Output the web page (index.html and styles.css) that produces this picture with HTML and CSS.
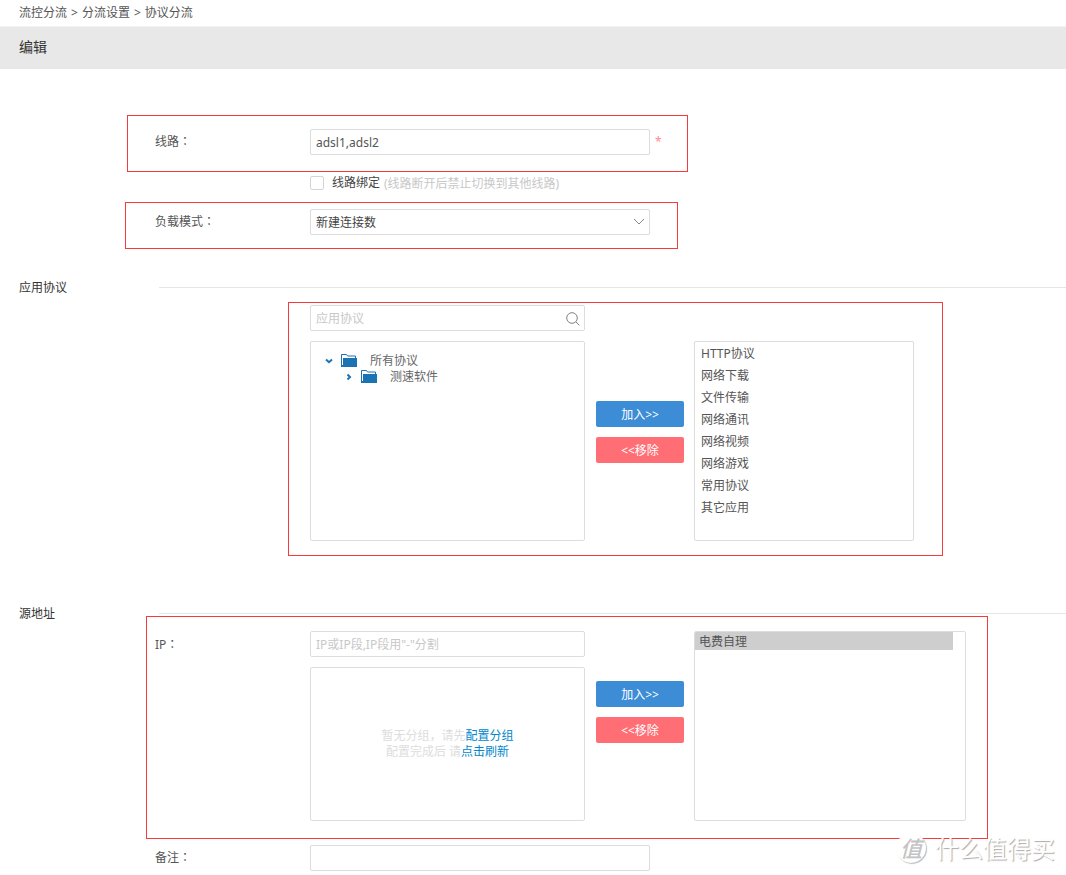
FILE: index.html
```html
<!DOCTYPE html>
<html lang="zh-CN">
<head>
<meta charset="utf-8">
<title>协议分流</title>
<link rel="stylesheet" href="styles.css">
</head>
<body>
<nav class="breadcrumb">
  <span>流控分流</span><span>&gt;</span><span>分流设置</span><span>&gt;</span><span>协议分流</span>
</nav>
<header class="titlebar"><h1 class="title">编辑</h1></header>
<main>
<form class="form">
  <div class="row row-line">
    <label class="label" for="line">线路<span class="mark" lang="zh-TW">：</span></label>
    <input class="field wide" id="line" type="text" value="adsl1,adsl2">
    <span class="required">*</span>
    <span class="outline outline-line"></span>
  </div>
  <div class="row row-check">
    <span class="label"></span>
    <input class="check" id="bind" type="checkbox">
    <label class="check-label" for="bind">线路绑定</label>
    <span class="hint">(线路断开后禁止切换到其他线路)</span>
  </div>
  <div class="row row-line">
    <label class="label" for="mode">负载模式<span class="mark" lang="zh-TW">：</span></label>
    <span class="dropdown wide">
      <select class="field" id="mode"><option>新建连接数</option></select>
      <svg class="arrow" viewBox="0 0 12 8" aria-hidden="true"><path d="M1 1l5 5 5-5"/></svg>
    </span>
    <span class="outline outline-mode"></span>
  </div>

  <div class="section"><h2 class="section-title">应用协议</h2><span class="rule"></span></div>
  <div class="row row-top">
    <span class="label"></span>
    <div class="stack">
      <div class="search">
        <input class="field" type="text" placeholder="应用协议" aria-label="应用协议">
        <svg class="lens" viewBox="0 0 14 14" aria-hidden="true"><circle cx="6" cy="6" r="5.3"/><path d="M9.8 9.8l3.6 3.6"/></svg>
      </div>
      <div class="picker">
        <ul class="box tree">
          <li class="node">
            <svg class="caret" viewBox="0 0 8 8" aria-hidden="true"><path d="M1 2.500L4 5.200l3-2.700"/></svg>
            <svg class="folder" viewBox="0 0 16 14" aria-hidden="true"><path class="folder-back" d="M.5 12.500V.5H5.500l1 1.500H14.500V4"/><path class="folder-front" d="M2 4H16V13H0V11H2z"/></svg>
            <span>所有协议</span>
          </li>
          <li class="node node-child">
            <svg class="caret" viewBox="0 0 8 8" aria-hidden="true"><path d="M2.500 1.500L5 4 2.500 6.500"/></svg>
            <svg class="folder" viewBox="0 0 16 14" aria-hidden="true"><path class="folder-back" d="M.5 12.500V.5H5.500l1 1.500H14.500V4"/><path class="folder-front" d="M2 4H16V13H0V11H2z"/></svg>
            <span>测速软件</span>
          </li>
        </ul>
        <div class="actions actions-protocol">
          <button class="btn btn-add" type="button">加入&gt;&gt;</button>
          <button class="btn btn-remove" type="button">&lt;&lt;移除</button>
        </div>
        <select class="box list list-protocol" multiple aria-label="已选协议">
          <option>HTTP协议</option>
          <option>网络下载</option>
          <option>文件传输</option>
          <option>网络通讯</option>
          <option>网络视频</option>
          <option>网络游戏</option>
          <option>常用协议</option>
          <option>其它应用</option>
        </select>
      </div>
    </div>
    <span class="outline outline-protocol"></span>
  </div>

  <div class="section section-source"><h2 class="section-title">源地址</h2><span class="rule"></span></div>
  <div class="row row-top">
    <label class="label" for="ip">IP<span class="mark" lang="zh-TW">：</span></label>
    <div class="picker">
      <div class="stack">
        <input class="field" id="ip" type="text" placeholder="IP或IP段,IP段用&quot;-&quot;分割">
        <div class="box empty">
          <p class="empty-text">暂无分组，请先<a class="link" href="#">配置分组</a></p>
          <p class="empty-text">配置完成后 请<a class="link" href="#">点击刷新</a></p>
        </div>
      </div>
      <div class="actions actions-source">
        <button class="btn btn-add" type="button">加入&gt;&gt;</button>
        <button class="btn btn-remove" type="button">&lt;&lt;移除</button>
      </div>
      <select class="box list list-source" multiple aria-label="已选源地址">
        <option selected>电费自理</option>
      </select>
    </div>
    <span class="outline outline-source"></span>
  </div>

  <div class="row row-line row-note">
    <label class="label" for="note">备注<span class="mark" lang="zh-TW">：</span></label>
    <input class="field wide" id="note" type="text">
  </div>
</form>
</main>
<div class="watermark"><span class="seal">值</span><span>什么值得买</span></div>
</body>
</html>
```

FILE: styles.css
```css
* { box-sizing: border-box; }

body {
  margin: 0;
  position: relative;
  background: #fff;
  color: #555;
  font: 12px/16px "Noto Sans", "Noto Sans CJK SC", sans-serif;
}

input, select, button { font: inherit; color: inherit; margin: 0; }

.breadcrumb { display: flex; gap: 4px; height: 26px; align-items: center; padding: 0 19px; }

.titlebar {
  height: 43px;
  padding: 0 19px 2px;
  display: flex;
  align-items: center;
  background: #e8e8e8;
  border-top: 1px solid #f2f2f2;
}
.title { margin: 0; font-size: 14px; line-height: 20px; font-weight: 400; color: #333; }

.form { padding: 60px 0 4px; }

.row {
  position: relative;
  display: flex;
  align-items: center;
  padding-left: 155px;
}
.row-line { height: 26px; }
.row-top { align-items: flex-start; }
.row-check { height: 54px; padding-top: 1px; }
.row-note { margin-top: 24px; }

.label { flex: none; width: 155px; line-height: 28px; }
.mark { font-family: "Noto Sans CJK TC", sans-serif; line-height: 1; }

.field {
  width: 100%;
  height: 26px;
  padding: 0 5px;
  border: 1px solid #ddd;
  border-radius: 2px;
  background: #fff;
  outline: 0;
}
.field::placeholder { color: #c8c8c8; opacity: 1; }
.wide { width: 340px; }

.required { margin-left: 5px; color: #ff8c8c; }

.check {
  appearance: none;
  width: 14px;
  height: 14px;
  border: 1px solid #d5d5d5;
  border-radius: 2px;
}
.check-label { margin-left: 8px; color: #444; }
.hint { margin-left: 4px; padding-top: 3px; color: #c8c8c8; }

.dropdown, .search { position: relative; }
.dropdown .field { display: block; appearance: none; padding-top: 2px; color: #444; }
.arrow {
  position: absolute;
  top: 9px;
  right: 5px;
  width: 12px;
  height: 8px;
  fill: none;
  stroke: #888;
  pointer-events: none;
}
.search { width: 275px; }
.search .field { display: block; }
.lens {
  position: absolute;
  top: 7px;
  right: 5px;
  width: 14px;
  height: 14px;
  fill: none;
  stroke: #7c8287;
}

.section {
  display: flex;
  align-items: center;
  height: 16px;
  margin: 44px 0 10px;
  padding-left: 19px;
}
.section-source { margin-top: 64px; }
.section-title { width: 140px; margin: 0; padding-top: 2px; font-size: 12px; line-height: 16px; font-weight: 400; color: #333; }
.rule { flex: 1; height: 1px; background: #e6e6e6; }

.stack { display: flex; flex-direction: column; gap: 10px; }
.picker { display: flex; align-items: flex-start; }
.picker .stack { width: 275px; }

.box { margin: 0; border: 1px solid #ddd; border-radius: 2px; background: #fff; }

.tree { width: 275px; height: 200px; padding: 11px 14px; list-style: none; color: #666; }
.node { display: flex; align-items: center; height: 16px; }
.node-child { padding-left: 20px; }
.caret { width: 8px; height: 8px; fill: none; stroke: #1b73b3; stroke-width: 2; }
.folder { width: 16px; height: 14px; margin: 0 13px 0 8px; }
.folder-back { fill: none; stroke: #1b73b3; }
.folder-front { fill: #1b73b3; }

.actions { display: flex; flex-direction: column; gap: 10px; width: 88px; margin: 0 10px 0 11px; }
.actions-protocol { padding-top: 60px; }
.actions-source { padding-top: 50px; }
.btn { height: 26px; padding: 2px 0 0; border: 0; border-radius: 2px; color: #fff; }
.btn-add { background: #3c8cd6; }
.btn-remove { background: #ff6e74; }

.list { appearance: none; outline: 0; overflow: hidden; }
.list-protocol { width: 220px; height: 200px; padding: 2px 0; }
.list-protocol option { padding: 0 6px; line-height: 22px; min-height: 22px; }
.list-source { width: 272px; height: 190px; padding: 0 12px 0 0; }
.list-source option { padding: 0 4px; line-height: 16px; min-height: 17px; }
.list-source option:checked { background: #cecece; -webkit-text-fill-color: #555; }

.empty {
  display: flex;
  flex-direction: column;
  justify-content: center;
  height: 154px;
  text-align: center;
  color: #ddd;
}
.empty-text { height: 16px; margin: 0; }
.link { color: #0088cc; text-decoration: none; }

/* Red highlight frames drawn over the form */
.outline { position: absolute; border: 1px solid #f43c3c; pointer-events: none; }
.outline-line { top: -14px; left: 127px; width: 561px; height: 57px; }
.outline-mode { top: -7px; left: 125px; width: 553px; height: 47px; }
.outline-protocol { top: -3px; left: 288px; width: 655px; height: 254px; }
.outline-source { top: -15px; left: 146px; width: 842px; height: 223px; }

.watermark {
  position: absolute;
  right: 11px;
  bottom: 11px;
  display: flex;
  align-items: center;
  gap: 9px;
  color: #fff;
  font: 24px/32px "Noto Sans CJK SC", sans-serif;
  text-shadow: 1px 1px 1px #aaa;
  pointer-events: none;
}
.seal {
  width: 30px;
  height: 30px;
  border-radius: 50%;
  background: #fff;
  box-shadow: 1px 1px 1px #bbb;
  color: #c4c4c4;
  font-size: 22px;
  line-height: 28px;
  font-style: italic;
  font-weight: 500;
  text-align: center;
  text-shadow: none;
}
```
